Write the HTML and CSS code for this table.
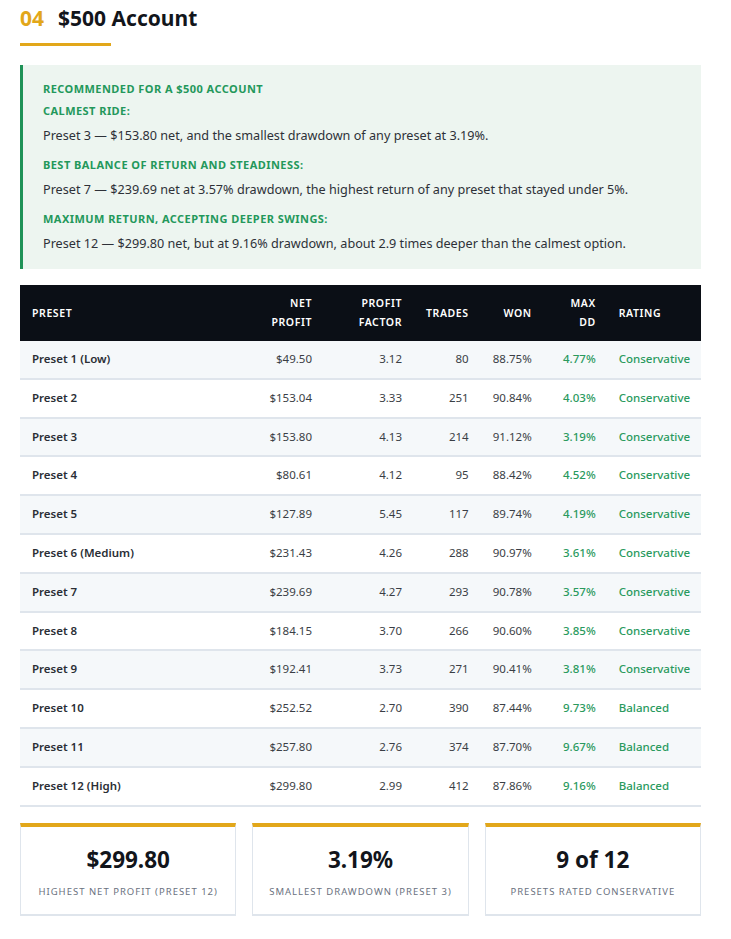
FILE: index.html
```html
<!DOCTYPE html>
<html lang="en">
<head>
<meta charset="utf-8">
<title>$500 Account</title>
<link rel="stylesheet" href="styles.css">
</head>
<body>
<main class="page">
  <header class="section-head">
    <h2 class="section-title"><span class="num">04</span>$500 Account</h2>
    <div class="underline"></div>
  </header>

  <section class="rec">
    <div class="rec-label rec-head">Recommended for a $500 account</div>
    <div class="rec-label">Calmest ride:</div>
    <p class="rec-text">Preset 3 — $153.80 net, and the smallest drawdown of any preset at 3.19%.</p>
    <div class="rec-label">Best balance of return and steadiness:</div>
    <p class="rec-text">Preset 7 — $239.69 net at 3.57% drawdown, the highest return of any preset that stayed under 5%.</p>
    <div class="rec-label">Maximum return, accepting deeper swings:</div>
    <p class="rec-text last">Preset 12 — $299.80 net, but at 9.16% drawdown, about 2.9 times deeper than the calmest option.</p>
  </section>

  <table class="data">
    <thead>
      <tr>
        <th class="c-name">Preset</th>
        <th class="c-net">Net<br>Profit</th>
        <th class="c-pf">Profit<br>Factor</th>
        <th class="c-tr">Trades</th>
        <th class="c-won">Won</th>
        <th class="c-dd">Max<br>DD</th>
        <th class="c-rate">Rating</th>
      </tr>
    </thead>
    <tbody>
      <tr><td class="c-name">Preset 1 (Low)</td><td class="c-net">$49.50</td><td class="c-pf">3.12</td><td class="c-tr">80</td><td class="c-won">88.75%</td><td class="c-dd">4.77%</td><td class="c-rate">Conservative</td></tr>
      <tr><td class="c-name">Preset 2</td><td class="c-net">$153.04</td><td class="c-pf">3.33</td><td class="c-tr">251</td><td class="c-won">90.84%</td><td class="c-dd">4.03%</td><td class="c-rate">Conservative</td></tr>
      <tr><td class="c-name">Preset 3</td><td class="c-net">$153.80</td><td class="c-pf">4.13</td><td class="c-tr">214</td><td class="c-won">91.12%</td><td class="c-dd">3.19%</td><td class="c-rate">Conservative</td></tr>
      <tr><td class="c-name">Preset 4</td><td class="c-net">$80.61</td><td class="c-pf">4.12</td><td class="c-tr">95</td><td class="c-won">88.42%</td><td class="c-dd">4.52%</td><td class="c-rate">Conservative</td></tr>
      <tr><td class="c-name">Preset 5</td><td class="c-net">$127.89</td><td class="c-pf">5.45</td><td class="c-tr">117</td><td class="c-won">89.74%</td><td class="c-dd">4.19%</td><td class="c-rate">Conservative</td></tr>
      <tr><td class="c-name">Preset 6 (Medium)</td><td class="c-net">$231.43</td><td class="c-pf">4.26</td><td class="c-tr">288</td><td class="c-won">90.97%</td><td class="c-dd">3.61%</td><td class="c-rate">Conservative</td></tr>
      <tr><td class="c-name">Preset 7</td><td class="c-net">$239.69</td><td class="c-pf">4.27</td><td class="c-tr">293</td><td class="c-won">90.78%</td><td class="c-dd">3.57%</td><td class="c-rate">Conservative</td></tr>
      <tr><td class="c-name">Preset 8</td><td class="c-net">$184.15</td><td class="c-pf">3.70</td><td class="c-tr">266</td><td class="c-won">90.60%</td><td class="c-dd">3.85%</td><td class="c-rate">Conservative</td></tr>
      <tr><td class="c-name">Preset 9</td><td class="c-net">$192.41</td><td class="c-pf">3.73</td><td class="c-tr">271</td><td class="c-won">90.41%</td><td class="c-dd">3.81%</td><td class="c-rate">Conservative</td></tr>
      <tr><td class="c-name">Preset 10</td><td class="c-net">$252.52</td><td class="c-pf">2.70</td><td class="c-tr">390</td><td class="c-won">87.44%</td><td class="c-dd">9.73%</td><td class="c-rate">Balanced</td></tr>
      <tr><td class="c-name">Preset 11</td><td class="c-net">$257.80</td><td class="c-pf">2.76</td><td class="c-tr">374</td><td class="c-won">87.70%</td><td class="c-dd">9.67%</td><td class="c-rate">Balanced</td></tr>
      <tr><td class="c-name">Preset 12 (High)</td><td class="c-net">$299.80</td><td class="c-pf">2.99</td><td class="c-tr">412</td><td class="c-won">87.86%</td><td class="c-dd">9.16%</td><td class="c-rate">Balanced</td></tr>
    </tbody>
  </table>

  <section class="stats">
    <div class="stat">
      <div class="stat-value">$299.80</div>
      <div class="stat-label">Highest net profit (Preset 12)</div>
    </div>
    <div class="stat">
      <div class="stat-value">3.19%</div>
      <div class="stat-label">Smallest drawdown (Preset 3)</div>
    </div>
    <div class="stat">
      <div class="stat-value">9 of 12</div>
      <div class="stat-label">Presets rated conservative</div>
    </div>
  </section>
</main>
</body>
</html>
```

FILE: styles.css
```css
* { box-sizing: border-box; }

html, body {
  margin: 0;
  padding: 0;
  background: #ffffff;
}

body {
  font-family: "Noto Sans", "Open Sans", sans-serif;
  color: #2b2f36;
}

.page {
  width: 681px;
  margin-left: 20px;
  padding-top: 4px;
}

.section-title {
  margin: 0;
  font-size: 21px;
  line-height: 28px;
  font-weight: 700;
  color: #12151b;
}

.section-title .num {
  color: #e2a71a;
  margin-right: 14px;
}

.underline {
  width: 91px;
  height: 3px;
  background: #e2a71a;
  margin-top: 11px;
}

.rec {
  margin-top: 19px;
  background: #edf5f0;
  border-left: 3px solid #1f9257;
  padding: 16px 20px 15px 20px;
}

.rec-label {
  font-size: 11px;
  line-height: 16px;
  font-weight: 700;
  text-transform: uppercase;
  letter-spacing: 0.45px;
  color: #23985b;
}

.rec-head {
  margin-bottom: 6px;
}

.rec-text {
  margin: 5px 0 11px 0;
  font-size: 12.65px;
  line-height: 22px;
  color: #2e3138;
}

.rec-text.last {
  margin-bottom: 0;
}

.data {
  margin-top: 16px;
  width: 100%;
  border-collapse: collapse;
  font-size: 11.5px;
}

.data th {
  background: #0b0f16;
  color: #ffffff;
  font-size: 10.5px;
  font-weight: 600;
  letter-spacing: 0.6px;
  text-transform: uppercase;
  line-height: 19px;
  padding: 9px 0;
  vertical-align: middle;
}

.data td {
  padding: 10px 0;
  line-height: 16.8px;
  border-bottom: 2px solid #dfe5ec;
  color: #3a3e45;
}

.data tbody tr:nth-child(odd) td {
  background: #f5f8fa;
}

.c-name { text-align: left; padding-left: 12px !important; width: 178px; }
.c-net { text-align: right; width: 114px; }
.c-pf { text-align: right; width: 90px; }
.c-tr { text-align: right; width: 66px; }
.c-won { text-align: right; width: 63px; }
.c-dd { text-align: right; width: 64px; }
.c-rate { text-align: left; padding-left: 23px !important; }

.data th.c-tr { text-align: center; padding-left: 24px !important; }

td.c-name {
  font-weight: 600;
  color: #2a2e35;
}

td.c-dd, td.c-rate {
  color: #2a9a5e;
  font-weight: 500;
}

.stats {
  margin-top: 16px;
  display: grid;
  grid-template-columns: repeat(3, 1fr);
  gap: 16px;
}

.stat {
  border: 1px solid #dfe5ec;
  border-bottom-width: 2px;
  border-top: 4px solid #e2a71a;
  padding: 19px 8px 15px;
  text-align: center;
}

.stat-value {
  font-size: 22.5px;
  line-height: 28px;
  font-weight: 700;
  color: #12151b;
}

.stat-label {
  margin-top: 11px;
  font-size: 9.5px;
  line-height: 14px;
  letter-spacing: 1px;
  text-transform: uppercase;
  color: #6b7280;
}
```
